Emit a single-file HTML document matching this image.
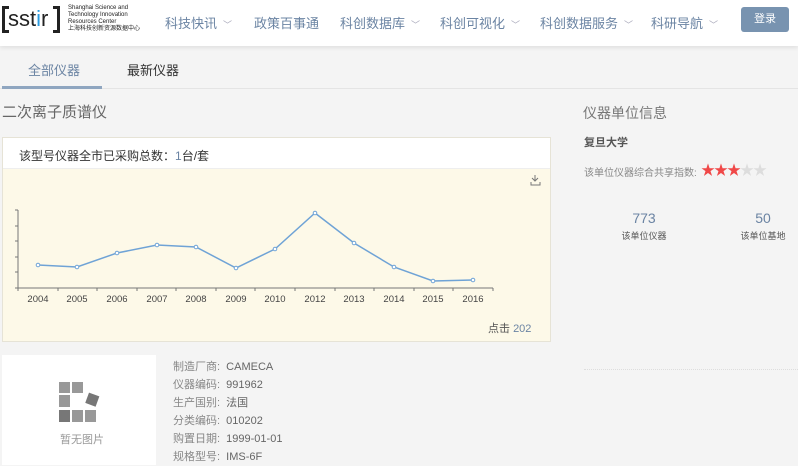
<!DOCTYPE html>
<html><head><meta charset="utf-8"><style>
*{margin:0;padding:0;box-sizing:border-box}
body{width:798px;height:465px;overflow:hidden;background:#f4f4f4;font-family:"Liberation Sans","Noto Sans CJK SC",sans-serif;position:relative;color:#333}
.a{position:absolute;white-space:nowrap}
.nav{position:absolute;left:0;top:0;width:798px;height:46px;background:#fff;box-shadow:0 2px 4px rgba(0,0,0,.08)}
.ni{position:absolute;top:13px;font-size:13px;color:#6b84a3}
.ni i{font-style:normal;font-size:9px;color:#aab;margin-left:6px}
.tabs{position:absolute;left:0;top:46px;width:798px;height:43px;border-bottom:1px solid #e4e4e4}
</style></head><body>
<div class="nav">
 <div class="a" style="left:2px;top:6px;width:58px;height:27px;border:3px solid #222;"></div>
 <div class="a" style="left:9px;top:3px;width:44px;height:33px;background:#fff"></div>
 <div class="a" style="left:8px;top:6px;font-size:22px;color:#222;letter-spacing:0px">sst<span style="color:#2a9be0">i</span>r</div>
 <div class="a" style="left:68px;top:5px;font-size:6px;line-height:7px;color:#222">Shanghai Science and<br>Technology Innovation<br>Resources Center<br>上海科技创新资源数据中心</div>
 <div class="ni" style="left:165px">科技快讯<i>﹀</i></div>
 <div class="ni" style="left:254px">政策百事通</div>
 <div class="ni" style="left:340px">科创数据库<i>﹀</i></div>
 <div class="ni" style="left:440px">科创可视化<i>﹀</i></div>
 <div class="ni" style="left:540px">科创数据服务<i>﹀</i></div>
 <div class="ni" style="left:651px">科研导航<i>﹀</i></div>
 <div class="a" style="left:741px;top:7px;width:48px;height:25px;background:#7893b0;border-radius:3px;color:#fff;font-size:11px;text-align:center;line-height:25px">登录</div>
</div>
<div class="tabs">
 <div class="a" style="left:28px;top:14px;font-size:13px;color:#6b84a3">全部仪器</div>
 <div class="a" style="left:127px;top:14px;font-size:13px;color:#333">最新仪器</div>
 <div class="a" style="left:2px;top:40px;width:100px;height:3px;background:#8fa6c0"></div>
</div>
<div class="a" style="left:2px;top:101px;font-size:15px;color:#666">二次离子质谱仪</div>
<div class="a" style="left:2px;top:137px;width:549px;height:205px;background:#fdf9e8;border:1px solid #e6e3d6"></div>
<div class="a" style="left:3px;top:138px;width:547px;height:31px;background:#fff;border-bottom:1px solid #eee"></div>
<div class="a" style="left:19px;top:147px;font-size:12px;color:#333">该型号仪器全市已采购总数：<span style="color:#6b84a3">1</span>台/套</div>
<svg class="a" style="left:0;top:170px" width="552" height="135">
 <g stroke="#777" fill="none" stroke-width="1">
  <path d="M535 5v6m-3-3l3 3 3-3M531 12v3h9v-3"/>
  <path d="M18 40v78M15 40h3M15 56h3M15 71h3M15 87h3M15 102h3M15 118h3M18 118h475"/>
  <path d="M18 118v3M58 118v3M97 118v3M137 118v3M176 118v3M216 118v3M255 118v3M295 118v3M335 118v3M374 118v3M414 118v3M453 118v3M493 118v3"/>
 </g>
 <polyline fill="none" stroke="#6fa3d6" stroke-width="1.5" points="38,95 77,97 117,83 157,75 196,77 236,98 275,79 315,43 354,73 394,97 433,111 473,110"/>
 <g fill="#fff" stroke="#6fa3d6" stroke-width="1"><circle cx="38" cy="95" r="1.8"/><circle cx="77" cy="97" r="1.8"/><circle cx="117" cy="83" r="1.8"/><circle cx="157" cy="75" r="1.8"/><circle cx="196" cy="77" r="1.8"/><circle cx="236" cy="98" r="1.8"/><circle cx="275" cy="79" r="1.8"/><circle cx="315" cy="43" r="1.8"/><circle cx="354" cy="73" r="1.8"/><circle cx="394" cy="97" r="1.8"/><circle cx="433" cy="111" r="1.8"/><circle cx="473" cy="110" r="1.8"/></g>
 <g font-family="Liberation Sans" font-size="9.5" fill="#444" text-anchor="middle">
  <text x="38" y="132">2004</text><text x="77" y="132">2005</text><text x="117" y="132">2006</text><text x="157" y="132">2007</text><text x="196" y="132">2008</text><text x="236" y="132">2009</text><text x="275" y="132">2010</text><text x="315" y="132">2012</text><text x="354" y="132">2013</text><text x="394" y="132">2014</text><text x="433" y="132">2015</text><text x="473" y="132">2016</text>
 </g>
</svg>
<div class="a" style="left:488px;top:320px;font-size:11px;color:#555">点击 <span style="color:#6b84a3">202</span></div>
<div class="a" style="left:2px;top:355px;width:154px;height:110px;background:#fff"></div>
<svg class="a" style="left:58px;top:381px" width="46" height="44">
 <rect x="1" y="1" width="11" height="11" fill="#999"/><rect x="14" y="1" width="11" height="11" fill="#999"/>
 <rect x="1" y="14" width="11" height="12" fill="#999"/>
 <rect x="1" y="29" width="11" height="12" fill="#777"/><rect x="14" y="29" width="11" height="12" fill="#999"/><rect x="27" y="29" width="11" height="12" fill="#999"/>
 <rect x="29" y="13" width="11" height="11" fill="#777" transform="rotate(20 34 18)"/>
</svg>
<div class="a" style="left:60px;top:431px;font-size:11px;color:#999">暂无图片</div>
<div class="a" style="left:173px;top:358px;font-size:11px;line-height:18px;color:#888">制造厂商:&nbsp; <span style="color:#666">CAMECA</span><br>仪器编码:&nbsp; <span style="color:#666">991962</span><br>生产国别:&nbsp; <span style="color:#666">法国</span><br>分类编码:&nbsp; <span style="color:#666">010202</span><br>购置日期:&nbsp; <span style="color:#666">1999-01-01</span><br>规格型号:&nbsp; <span style="color:#666">IMS-6F</span></div>
<div class="a" style="left:583px;top:103px;font-size:14px;color:#777">仪器单位信息</div>
<div class="a" style="left:584px;top:134px;font-size:11px;font-weight:bold;color:#555">复旦大学</div>
<div class="a" style="left:584px;top:164px;font-size:10px;color:#888">该单位仪器综合共享指数:</div>
<div class="a" style="left:701px;top:160px;font-size:14px;letter-spacing:-1px"><span style="color:#f04848">★★★</span><span style="color:#ddd">★★</span></div>
<div class="a" style="left:604px;top:210px;width:80px;text-align:center;font-size:14px;color:#6b84a3">773</div>
<div class="a" style="left:604px;top:229px;width:80px;text-align:center;font-size:9px;color:#555">该单位仪器</div>
<div class="a" style="left:723px;top:210px;width:80px;text-align:center;font-size:14px;color:#6b84a3">50</div>
<div class="a" style="left:723px;top:229px;width:80px;text-align:center;font-size:9px;color:#555">该单位基地</div>
<div class="a" style="left:584px;top:369px;width:214px;border-top:1px dotted #ddd"></div>
</body></html>
